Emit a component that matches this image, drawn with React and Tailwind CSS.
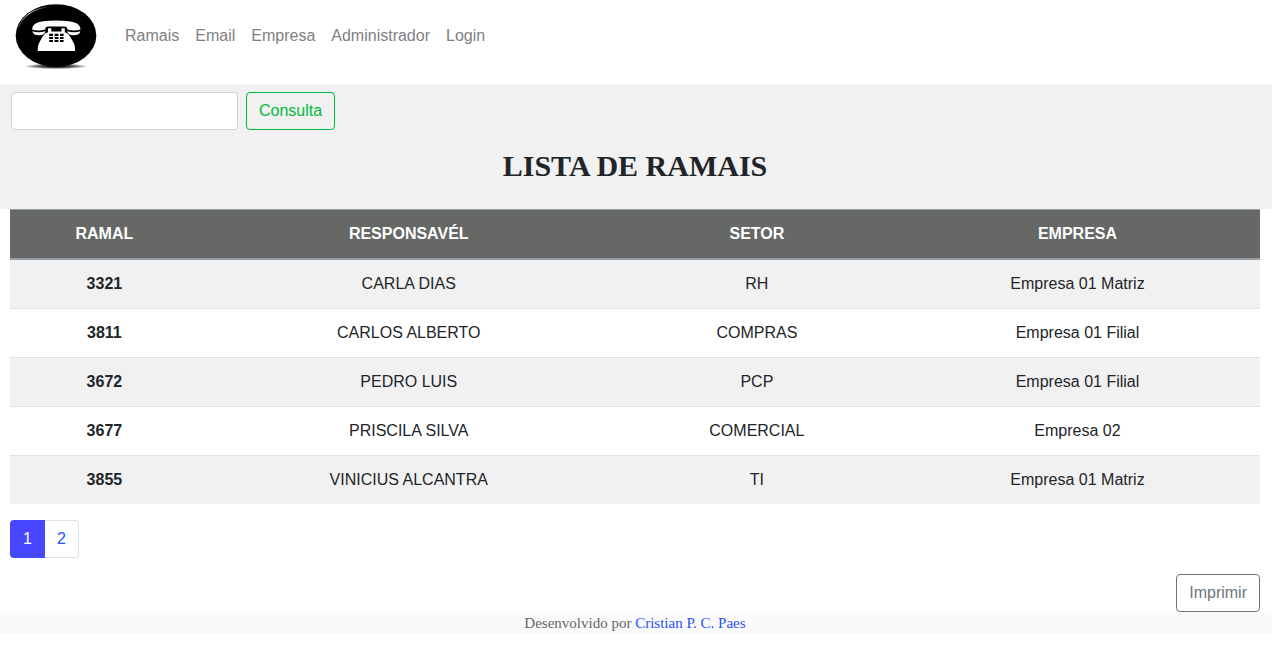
const links = ["Ramais", "Email", "Empresa", "Administrador", "Login"];

const rows = [
  ["3321", "CARLA DIAS", "RH", "Empresa 01 Matriz"],
  ["3811", "CARLOS ALBERTO", "COMPRAS", "Empresa 01 Filial"],
  ["3672", "PEDRO LUIS", "PCP", "Empresa 01 Filial"],
  ["3677", "PRISCILA SILVA", "COMERCIAL", "Empresa 02"],
  ["3855", "VINICIUS ALCANTRA", "TI", "Empresa 01 Matriz"],
];

function Logo() {
  return (
    <svg viewBox="0 0 90 72" className="h-[72px] w-[90px]" aria-hidden="true">
      <defs>
        <radialGradient id="shadow">
          <stop offset="0" stopColor="#000" />
          <stop offset="0.5" stopColor="#000" stopOpacity="0.7" />
          <stop offset="1" stopColor="#000" stopOpacity="0" />
        </radialGradient>
        <linearGradient id="shine" x1="0" y1="1" x2="1" y2="0">
          <stop offset="0" stopColor="#fff" stopOpacity="0.1" />
          <stop offset="0.5" stopColor="#fff" stopOpacity="0.9" />
          <stop offset="1" stopColor="#fff" stopOpacity="0" />
        </linearGradient>
      </defs>
      <ellipse cx="46" cy="66.3" rx="32" ry="2.8" fill="url(#shadow)" />
      <ellipse cx="46" cy="35.5" rx="40.3" ry="31.3" fill="#000" />
      <path d="M8.3 29C11.5 16.5 23 8.5 40 6.5" fill="none" stroke="url(#shine)" strokeWidth="1" />
      <path
        d="M22.2 29.5C22.2 24.5 26.5 22 33 21.2C41 20.3 51 20.3 59 21.2C66 22 70.5 24.5 70.5 29.5C66 31 61.5 30.5 57.3 29.5C57.5 27.8 56.5 26.6 54.5 26.5L38 26.5C36 26.6 35.2 27.8 35.3 29.5C31 30.5 26.5 31 22.2 29.5Z"
        fill="#fff"
      />
      <path
        d="M22.4 31.3C26 32.6 31 32.6 35.3 31.3C35.2 33.8 33 35.2 29 35.2C25 35.2 22.7 34 22.4 31.3ZM57.3 31.3C61.4 32.6 66.6 32.6 70.3 31.3C70 34 67.6 35.2 63.6 35.2C59.6 35.2 57.4 33.8 57.3 31.3Z"
        fill="#fff"
      />
      <path
        d="M38 28.3H41.3V31.5H51.5V28.3H54.8V32.3C57.5 33 59.6 35.5 61.5 39C63.8 43 65 45.5 65 48V51H27.8V48C27.8 45.5 29 43 31.2 39C33.1 35.5 35.2 33 38 32.3Z"
        fill="#fff"
      />
      <path
        d="M39.2 33.8h3.8v2.3h-3.8zM44.6 33.8h3.8v2.3h-3.8zM50 33.8h3.6v2.3h-3.6zM39.2 37.1h3.8v2h-3.8zM44.6 37.1h3.8v2h-3.8zM50 37.1h3.6v2h-3.6zM39.2 40.1h3.8v1.9h-3.8zM44.6 40.1h3.8v1.9h-3.8zM50 40.1h3.6v1.9h-3.6z"
        fill="#000"
      />
    </svg>
  );
}

export default function App() {
  return (
    <div className="font-['Liberation_Sans',Arial,sans-serif] text-base text-[#212529]">
      <nav className="flex h-[84px] items-start px-[10px]">
        <a href="#inicio" aria-label="Início">
          <Logo />
        </a>
        <ul className="ml-[17px] flex pt-6">
          {links.map((link) => (
            <li key={link}>
              <a href={"#" + link.toLowerCase()} className="px-2 text-[#808080]">
                {link}
              </a>
            </li>
          ))}
        </ul>
      </nav>

      <header className="bg-[#f1f1f1] pt-2 pr-3 pb-[25px] pl-[10px]">
        <form className="ml-px flex gap-2" onSubmit={(e) => e.preventDefault()}>
          <input
            type="search"
            aria-label="Consultar ramal"
            className="h-[38px] w-[227px] rounded border border-[#ced4da] bg-white px-3"
          />
          <button type="submit" className="h-[38px] rounded border border-[#00b83f] px-3 pb-px text-[#00b83f]">
            Consulta
          </button>
        </form>
        <h1 className="mt-[18px] text-center font-['Liberation_Serif',serif] text-[30px] leading-9 font-bold">
          LISTA DE RAMAIS
        </h1>
      </header>

      <main className="pr-3 pl-[10px]">
        <table className="w-full table-fixed border-separate border-spacing-0 text-center">
          <colgroup>
            <col className="w-[15.1%]" />
            <col className="w-[33.6%]" />
            <col className="w-[22.1%]" />
            <col />
          </colgroup>
          <thead className="bg-[#666866] text-white">
            <tr>
              {["RAMAL", "RESPONSAVÉL", "SETOR", "EMPRESA"].map((title) => (
                <th key={title} scope="col" className="border-t border-b-2 border-[#969ea8] p-3 font-bold">
                  {title}
                </th>
              ))}
            </tr>
          </thead>
          <tbody>
            {rows.map(([ramal, ...cells], i) => (
              <tr key={ramal} className={i % 2 === 0 ? "bg-[#f1f1f1]" : "bg-white"}>
                <th
                  scope="row"
                  className={i === 0 ? "p-3 font-bold" : "border-t border-[#dee2e6] p-3 font-bold"}
                >
                  {ramal}
                </th>
                {cells.map((cell, j) => (
                  <td key={j} className={i === 0 ? "p-3" : "border-t border-[#dee2e6] p-3"}>
                    {cell}
                  </td>
                ))}
              </tr>
            ))}
          </tbody>
        </table>

        <nav aria-label="Paginação" className="mt-4 flex">
          <a
            href="#pagina-1"
            aria-current="page"
            className="flex h-[38px] w-[35px] items-center justify-center rounded-l bg-[#4747ff] pb-px text-white"
          >
            1
          </a>
          <a
            href="#pagina-2"
            className="flex h-[38px] w-[34px] items-center justify-center rounded-r border border-l-0 border-[#dee2e6] pb-px text-[#2b50ff]"
          >
            2
          </a>
        </nav>

        <div className="mt-4 flex justify-end">
          <button type="button" className="h-[38px] rounded border border-[#6c757d] px-3 pb-px text-[#6c757d]">
            Imprimir
          </button>
        </div>
      </main>

      <footer className="bg-[#fafafa] pr-3 pl-[10px] text-center font-['Liberation_Serif',serif] text-[15px] leading-[22px] text-[#666666]">
        Desenvolvido por{" "}
        <a href="#autor" className="text-[#2b50ff]">
          Cristian P. C. Paes
        </a>
      </footer>
    </div>
  );
}
